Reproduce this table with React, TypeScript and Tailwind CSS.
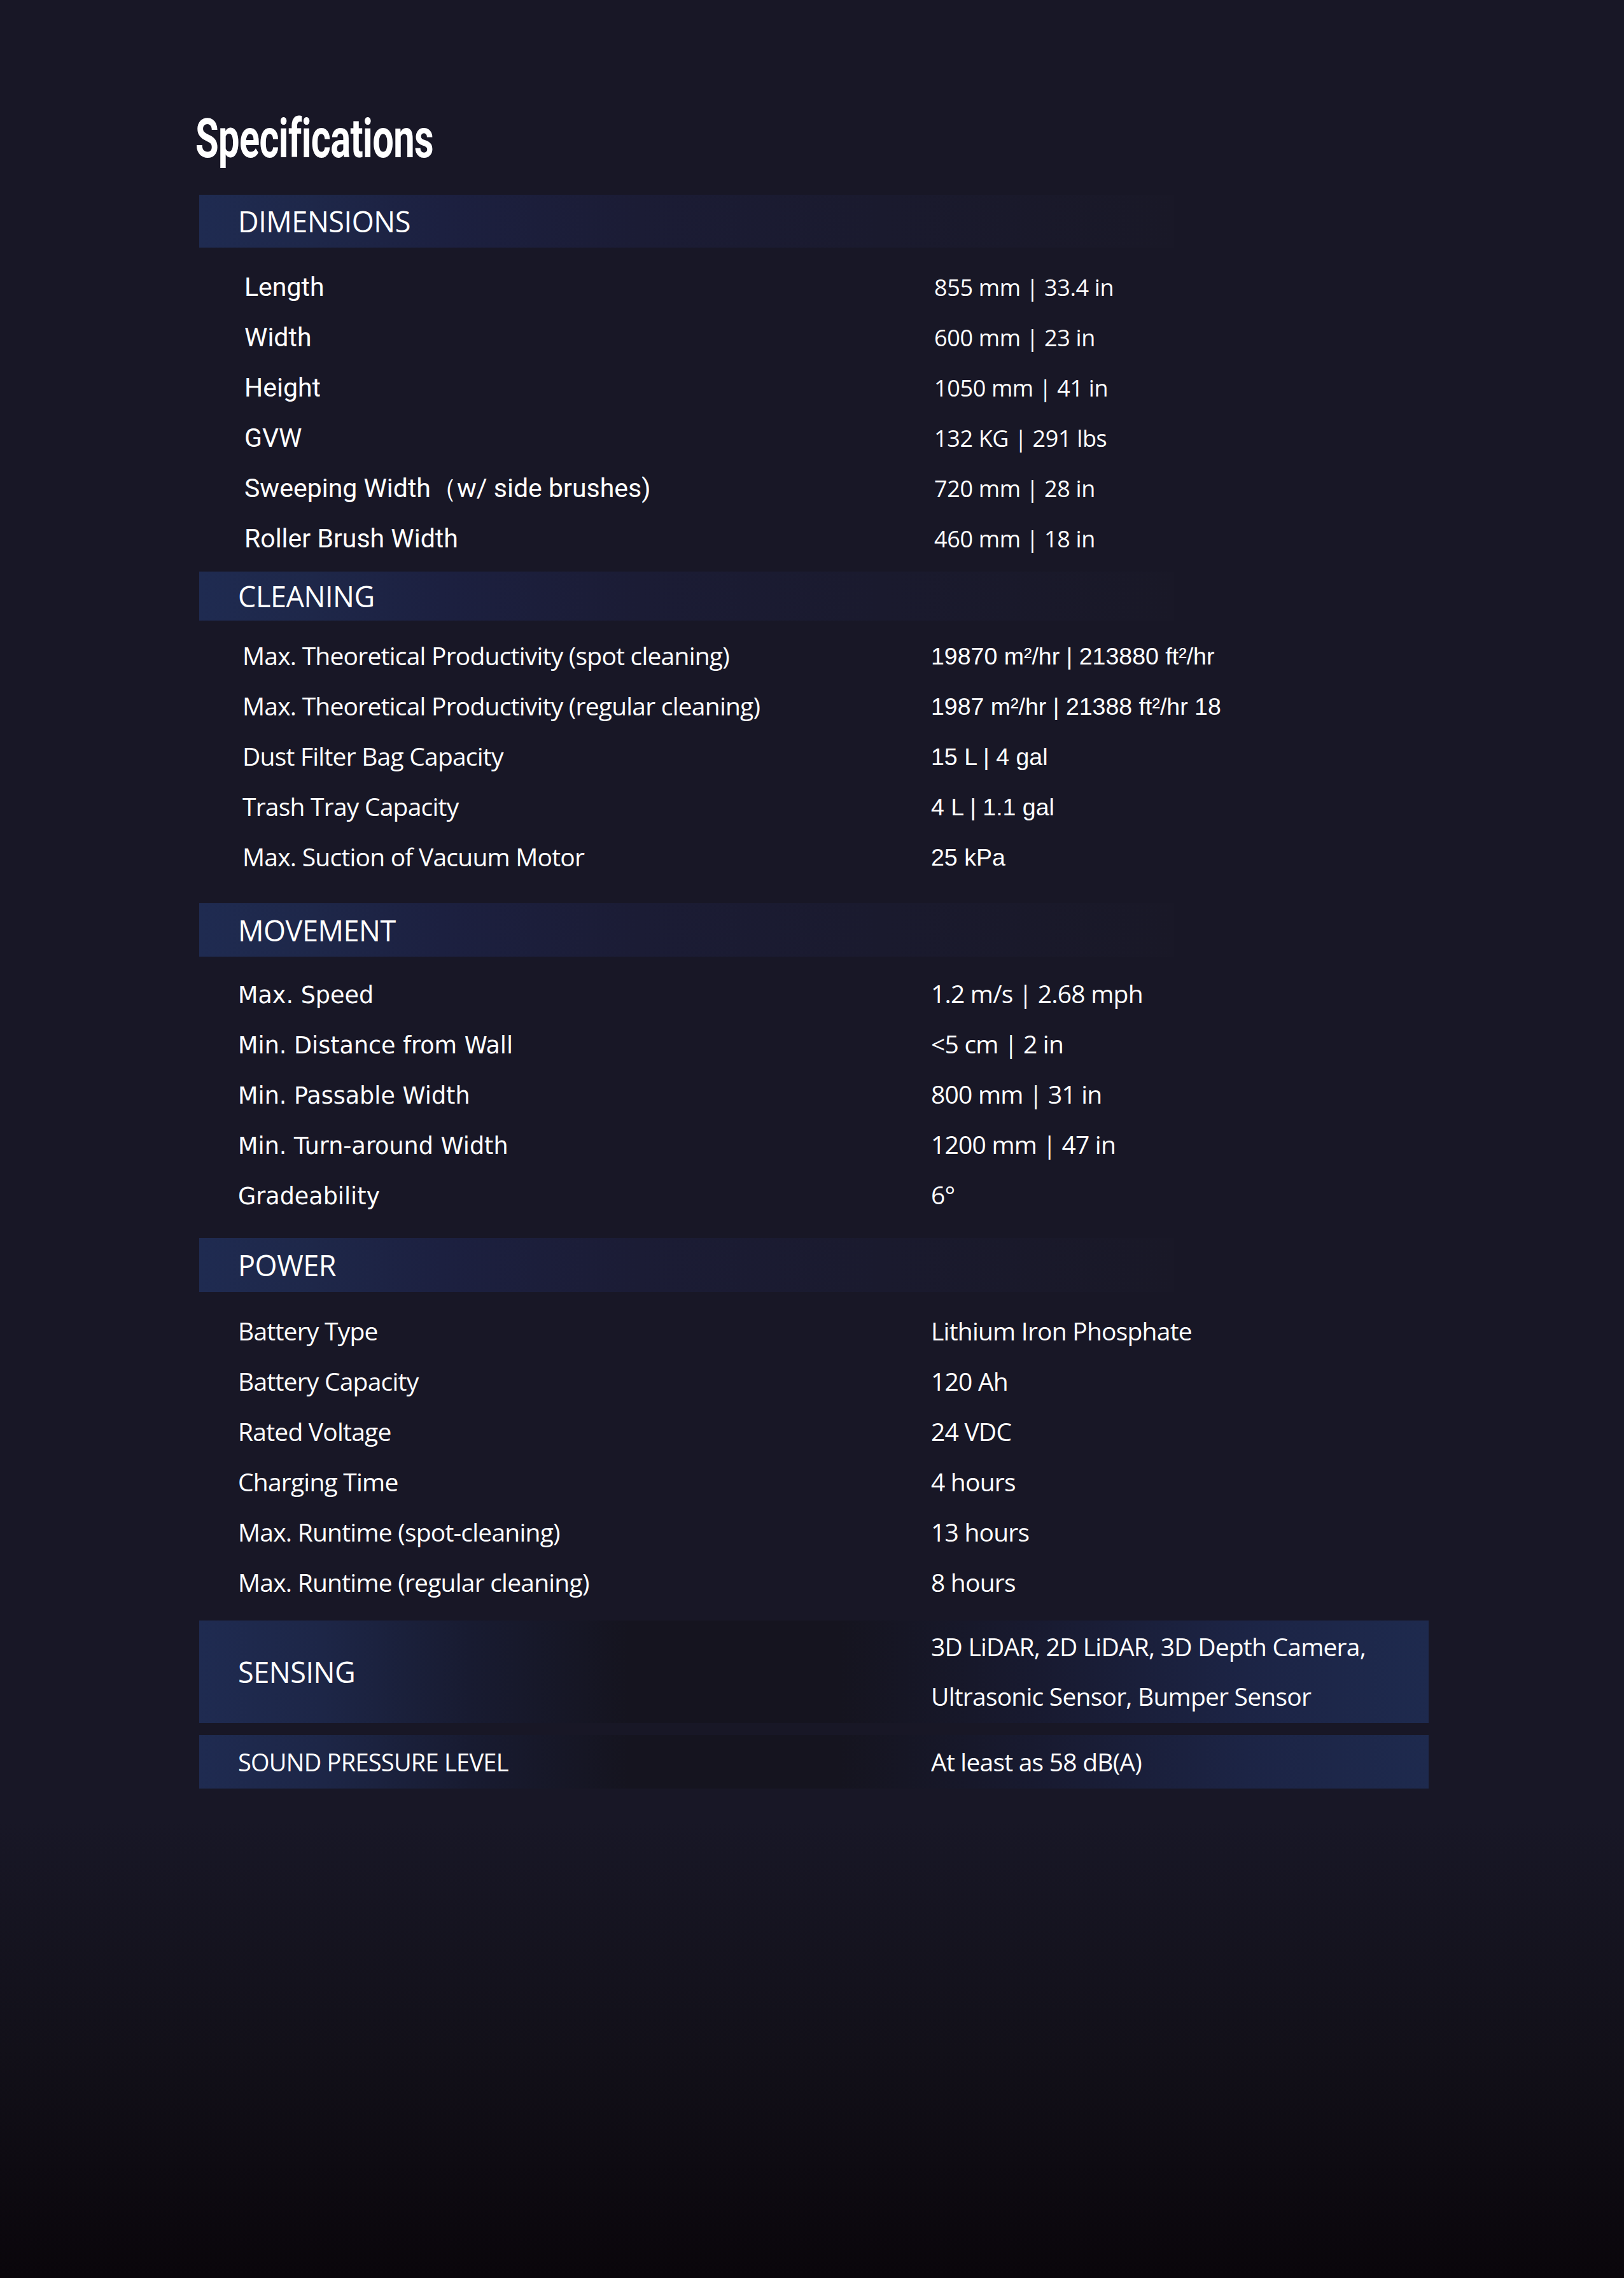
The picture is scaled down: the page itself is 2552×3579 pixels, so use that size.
import React from "react";

type Row = { label: string; value: string };

const myriad = "font-['Open_Sans',sans-serif] text-[39px] tracking-[-0.02em]";
const din = "font-['Roboto',sans-serif] text-[41px]";
const segoe = "font-['Open_Sans',sans-serif] text-[36px] tracking-[-0.01em]";
const arial = "font-['Liberation_Sans',Arial,sans-serif] text-[37.5px]";
const dejavu = "font-['DejaVu_Sans',sans-serif] text-[36.5px]";

const barBg =
  "bg-[linear-gradient(90deg,#1f2b51_0%,#1e2749_12%,#1c2040_25%,#1b1c35_45%,#1a1a2e_70%,#191827_100%)]";

function Heading({ title, mt, h }: { title: string; mt: string; h: string }) {
  return (
    <div className={`${mt} ${h} w-[1532px] ${barBg} flex items-center pl-[61px]`}>
      <span className="font-['Open_Sans',sans-serif] text-[45px] tracking-[-0.01em] text-white leading-none">
        {title}
      </span>
    </div>
  );
}

function Rows({
  rows,
  mt,
  labelPad,
  labelFont,
  valueFont,
  valueShift,
}: {
  rows: Row[];
  mt: string;
  labelPad: string;
  labelFont: string;
  valueFont: string;
  valueShift?: string;
}) {
  return (
    <div className={`${mt} flex flex-col`}>
      {rows.map((r) => (
        <div key={r.label} className="flex h-[79px] items-center text-white">
          <div className={`w-[1150px] ${labelPad} ${labelFont} whitespace-nowrap`}>{r.label}</div>
          <div className={`${valueFont} ${valueShift ?? ""} whitespace-nowrap`}>{r.value}</div>
        </div>
      ))}
    </div>
  );
}

export default function App() {
  const dims: Row[] = [
    { label: "Length", value: "855 mm | 33.4 in" },
    { label: "Width", value: "600 mm | 23 in" },
    { label: "Height", value: "1050 mm | 41 in" },
    { label: "GVW", value: "132 KG | 291 lbs" },
    { label: "Sweeping Width（w/ side brushes)", value: "720 mm | 28 in" },
    { label: "Roller Brush Width", value: "460 mm | 18 in" },
  ];
  const cleaning: Row[] = [
    { label: "Max. Theoretical Productivity (spot cleaning)", value: "19870 m²/hr | 213880 ft²/hr" },
    { label: "Max. Theoretical Productivity (regular cleaning)", value: "1987 m²/hr | 21388 ft²/hr 18" },
    { label: "Dust Filter Bag Capacity", value: "15 L | 4 gal" },
    { label: "Trash Tray Capacity", value: "4 L | 1.1 gal" },
    { label: "Max. Suction of Vacuum Motor", value: "25 kPa" },
  ];
  const movement: Row[] = [
    { label: "Max. Speed", value: "1.2 m/s | 2.68 mph" },
    { label: "Min. Distance from Wall", value: "<5 cm | 2 in" },
    { label: "Min. Passable Width", value: "800 mm | 31 in" },
    { label: "Min. Turn-around Width", value: "1200 mm | 47 in" },
    { label: "Gradeability", value: "6°" },
  ];
  const power: Row[] = [
    { label: "Battery Type", value: "Lithium Iron Phosphate" },
    { label: "Battery Capacity", value: "120 Ah" },
    { label: "Rated Voltage", value: "24 VDC" },
    { label: "Charging Time", value: "4 hours" },
    { label: "Max. Runtime (spot-cleaning)", value: "13 hours" },
    { label: "Max. Runtime (regular cleaning)", value: "8 hours" },
  ];

  return (
    <div className="w-[2552px] h-[3579px] overflow-hidden bg-[linear-gradient(180deg,#181726_0%,#181726_80%,#121019_90%,#0a060b_100%)]">
      <div className="pt-[176px] pl-[313px] flex flex-col">
        <div className="h-[84px] -ml-[6px]">
          <span className="inline-block origin-left scale-x-[0.7] font-['Roboto',sans-serif] font-bold text-[85px] leading-none text-white tracking-[-0.01em]">
            Specifications
          </span>
        </div>

        <Heading title="DIMENSIONS" mt="mt-[46px]" h="h-[83px]" />
        <Rows rows={dims} mt="mt-[23px]" labelPad="pl-[71px]" labelFont={din} valueFont={segoe} valueShift="ml-[5px]" />

        <Heading title="CLEANING" mt="mt-[12px]" h="h-[77px]" />
        <Rows rows={cleaning} mt="mt-[16px]" labelPad="pl-[68px]" labelFont={myriad} valueFont={arial} valueShift="mt-[2px]" />

        <Heading title="MOVEMENT" mt="mt-[33px]" h="h-[84px]" />
        <Rows rows={movement} mt="mt-[22px]" labelPad="pl-[61px]" labelFont={dejavu} valueFont={myriad} valueShift="-mt-[6px]" />

        <Heading title="POWER" mt="mt-[25px]" h="h-[85px]" />
        <Rows rows={power} mt="mt-[22px]" labelPad="pl-[61px]" labelFont={myriad} valueFont={myriad} />

        <div className="mt-[20px] h-[161px] w-[1932px] flex items-center text-white bg-[linear-gradient(90deg,#1f2b51_0%,#1d2647_10%,#181b31_22%,#15141f_35%,#15141f_52%,#181a30_68%,#1c2445_85%,#1e2a4e_100%)]">
          <div className="w-[1150px] pl-[61px] font-['Open_Sans',sans-serif] text-[45px] tracking-[-0.01em] leading-none">
            SENSING
          </div>
          <div className={`${myriad} leading-[78px] -mt-[2px]`}>
            <div>3D LiDAR, 2D LiDAR, 3D Depth Camera,</div>
            <div>Ultrasonic Sensor, Bumper Sensor</div>
          </div>
        </div>

        <div className="mt-[19px] h-[84px] w-[1932px] flex items-center text-white bg-[linear-gradient(90deg,#1f2b51_0%,#1d2647_10%,#181b31_22%,#15141f_35%,#15141f_52%,#181a30_68%,#1c2445_85%,#1e2a4e_100%)]">
          <div className="w-[1150px] pl-[61px] font-['Open_Sans',sans-serif] text-[38px] tracking-[-0.02em] leading-none">
            SOUND PRESSURE LEVEL
          </div>
          <div className={myriad}>At least as 58 dB(A)</div>
        </div>
      </div>
    </div>
  );
}
